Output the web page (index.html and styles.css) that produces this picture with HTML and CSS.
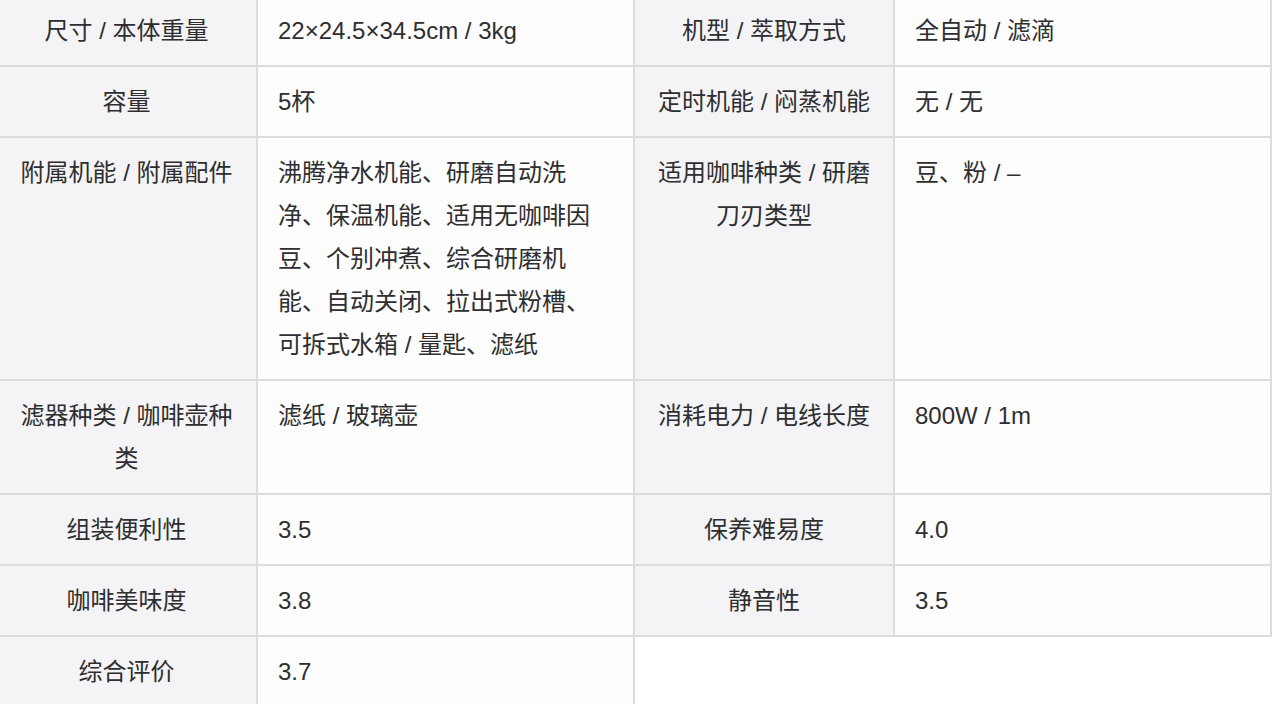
FILE: index.html
```html
<!DOCTYPE html>
<html lang="zh-CN">
<head>
<meta charset="utf-8">
<title>规格表</title>
<link rel="stylesheet" href="styles.css">
</head>
<body>
<table class="spec">
  <colgroup>
    <col class="c-key1">
    <col class="c-val1">
    <col class="c-key2">
    <col class="c-val2">
  </colgroup>
  <tbody>
    <tr>
      <td class="key">尺寸 / 本体重量</td>
      <td class="val">22×24.5×34.5cm / 3kg</td>
      <td class="key">机型 / 萃取方式</td>
      <td class="val">全自动 / 滤滴</td>
    </tr>
    <tr>
      <td class="key">容量</td>
      <td class="val">5杯</td>
      <td class="key">定时机能 / 闷蒸机能</td>
      <td class="val">无 / 无</td>
    </tr>
    <tr>
      <td class="key">附属机能 / 附属配件</td>
      <td class="val">沸腾净水机能、研磨自动洗净、保温机能、适用无咖啡因豆、个别冲煮、综合研磨机能、自动关闭、拉出式粉槽、可拆式水箱 / 量匙、滤纸</td>
      <td class="key">适用咖啡种类 / 研磨刀刃类型</td>
      <td class="val">豆、粉 / –</td>
    </tr>
    <tr>
      <td class="key">滤器种类 / 咖啡壶种类</td>
      <td class="val">滤纸 / 玻璃壶</td>
      <td class="key">消耗电力 / 电线长度</td>
      <td class="val">800W / 1m</td>
    </tr>
    <tr>
      <td class="key">组装便利性</td>
      <td class="val">3.5</td>
      <td class="key">保养难易度</td>
      <td class="val">4.0</td>
    </tr>
    <tr>
      <td class="key">咖啡美味度</td>
      <td class="val">3.8</td>
      <td class="key">静音性</td>
      <td class="val">3.5</td>
    </tr>
    <tr>
      <td class="key">综合评价</td>
      <td class="val">3.7</td>
    </tr>
  </tbody>
</table>
</body>
</html>
```

FILE: styles.css
```css
html, body {
  margin: 0;
  padding: 0;
  background: #ffffff;
  overflow: hidden;
}

body {
  font-family: "Liberation Sans", "Noto Sans CJK SC", sans-serif;
  font-size: 24px;
  color: #2e2e30;
}

.spec {
  border-collapse: collapse;
  table-layout: fixed;
  width: 1275px;
  margin: -6px 0 0 -5px;
}

.c-key1 { width: 261px; }
.c-val1 { width: 377px; }
.c-key2 { width: 260px; }
.c-val2 { width: 377px; }

.spec td {
  border: 2px solid #dcdcde;
  padding: 13px 20px;
  line-height: 43px;
  vertical-align: top;
}

.spec .key {
  background: #f4f4f6;
  text-align: center;
}

.spec .val {
  background: #fdfdfd;
  text-align: left;
}
```
